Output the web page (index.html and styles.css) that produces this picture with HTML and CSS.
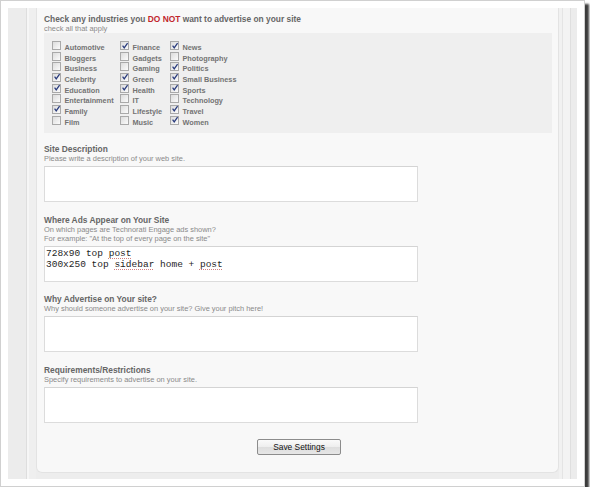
FILE: index.html
```html
<!DOCTYPE html>
<html>
<head>
<meta charset="utf-8">
<link rel="stylesheet" href="styles.css">
</head>
<body>
<div class="frame">
  <div class="shot">
    <div class="strip-left"></div>
    <div class="panel">
      <div class="label">Check any industries you <span class="red">DO NOT</span> want to advertise on your site</div>
      <div class="sub">check all that apply</div>
      <div class="checks">
        <div class="col col1">
          <div class="row"><span class="cb"></span><span class="lbl">Automotive</span></div>
          <div class="row"><span class="cb"></span><span class="lbl">Bloggers</span></div>
          <div class="row"><span class="cb"></span><span class="lbl">Business</span></div>
          <div class="row"><span class="cb on"><svg viewBox="0 0 9 9"><path d="M1.8 4.2 L3.6 6.6 L7.4 1.2"/></svg></span><span class="lbl">Celebrity</span></div>
          <div class="row"><span class="cb on"><svg viewBox="0 0 9 9"><path d="M1.8 4.2 L3.6 6.6 L7.4 1.2"/></svg></span><span class="lbl">Education</span></div>
          <div class="row"><span class="cb"></span><span class="lbl">Entertainment</span></div>
          <div class="row"><span class="cb on"><svg viewBox="0 0 9 9"><path d="M1.8 4.2 L3.6 6.6 L7.4 1.2"/></svg></span><span class="lbl">Family</span></div>
          <div class="row"><span class="cb"></span><span class="lbl">Film</span></div>
        </div>
        <div class="col col2">
          <div class="row"><span class="cb on"><svg viewBox="0 0 9 9"><path d="M1.8 4.2 L3.6 6.6 L7.4 1.2"/></svg></span><span class="lbl">Finance</span></div>
          <div class="row"><span class="cb"></span><span class="lbl">Gadgets</span></div>
          <div class="row"><span class="cb"></span><span class="lbl">Gaming</span></div>
          <div class="row"><span class="cb on"><svg viewBox="0 0 9 9"><path d="M1.8 4.2 L3.6 6.6 L7.4 1.2"/></svg></span><span class="lbl">Green</span></div>
          <div class="row"><span class="cb on"><svg viewBox="0 0 9 9"><path d="M1.8 4.2 L3.6 6.6 L7.4 1.2"/></svg></span><span class="lbl">Health</span></div>
          <div class="row"><span class="cb"></span><span class="lbl">IT</span></div>
          <div class="row"><span class="cb"></span><span class="lbl">Lifestyle</span></div>
          <div class="row"><span class="cb"></span><span class="lbl">Music</span></div>
        </div>
        <div class="col col3">
          <div class="row"><span class="cb on"><svg viewBox="0 0 9 9"><path d="M1.8 4.2 L3.6 6.6 L7.4 1.2"/></svg></span><span class="lbl">News</span></div>
          <div class="row"><span class="cb"></span><span class="lbl">Photography</span></div>
          <div class="row"><span class="cb on"><svg viewBox="0 0 9 9"><path d="M1.8 4.2 L3.6 6.6 L7.4 1.2"/></svg></span><span class="lbl">Politics</span></div>
          <div class="row"><span class="cb on"><svg viewBox="0 0 9 9"><path d="M1.8 4.2 L3.6 6.6 L7.4 1.2"/></svg></span><span class="lbl">Small Business</span></div>
          <div class="row"><span class="cb on"><svg viewBox="0 0 9 9"><path d="M1.8 4.2 L3.6 6.6 L7.4 1.2"/></svg></span><span class="lbl">Sports</span></div>
          <div class="row"><span class="cb"></span><span class="lbl">Technology</span></div>
          <div class="row"><span class="cb on"><svg viewBox="0 0 9 9"><path d="M1.8 4.2 L3.6 6.6 L7.4 1.2"/></svg></span><span class="lbl">Travel</span></div>
          <div class="row"><span class="cb on"><svg viewBox="0 0 9 9"><path d="M1.8 4.2 L3.6 6.6 L7.4 1.2"/></svg></span><span class="lbl">Women</span></div>
        </div>
      </div>

      <div class="label gap-first">Site Description</div>
      <div class="sub">Please write a description of your web site.</div>
      <div class="field"></div>

      <div class="label gap">Where Ads Appear on Your Site</div>
      <div class="sub">On which pages are Technorati Engage ads shown?</div>
      <div class="sub">For example: "At the top of every page on the site"</div>
      <div class="field mono">728x90 top <span class="spell">post</span><br>300x250 top <span class="spell">sidebar</span> home + <span class="spell">post</span></div>

      <div class="label gap">Why Advertise on Your site?</div>
      <div class="sub">Why should someone advertise on your site? Give your pitch here!</div>
      <div class="field"></div>

      <div class="label gap">Requirements/Restrictions</div>
      <div class="sub">Specify requirements to advertise on your site.</div>
      <div class="field"></div>

      <div class="actions"><button class="btn" type="button">Save Settings</button></div>
    </div>
    <div class="strip-right"></div>
  </div>
</div>
</body>
</html>
```

FILE: styles.css
```css
html, body {
  margin: 0;
  padding: 0;
  background: #ffffff;
}

.frame {
  box-sizing: border-box;
  width: 585px;
  height: 487px;
  border: 1px solid #d0d0d0;
  background: #ffffff;
  padding: 7px;
  box-shadow: 4px 4px 2px #3c3c3c;
}

.shot {
  display: flex;
  height: 471px;
  overflow: hidden;
  background: #ededed;
  font-family: "Liberation Sans", Arial, sans-serif;
}

.strip-left {
  flex: 0 0 28px;
  background: linear-gradient(to right, #ececec 0, #ececec 18px, #dedede 18px, #dedede 19px, #f6f6f6 19px, #f6f6f6 21px, #efefef 21px);
}

.strip-right {
  flex: 0 0 18px;
  background: linear-gradient(to right, #f1f1f1 0, #f1f1f1 3px, #e4e4e4 3px, #e4e4e4 4px, #f3f3f3 4px, #f3f3f3 11px, #dfdfdf 11px, #dfdfdf 12px, #ececec 12px);
}

.panel {
  flex: 0 0 523px;
  box-sizing: border-box;
  height: 465px;
  background: #f8f8f8;
  border: 1px solid #e3e3e3;
  border-top: none;
  border-radius: 0 0 6px 6px;
  padding: 6px 6px 0 7px;
}

.label {
  font-size: 8.4px;
  line-height: 10px;
  font-weight: bold;
  color: #666666;
  white-space: nowrap;
}

.red {
  color: #c1262c;
}

.sub {
  font-size: 7.45px;
  line-height: 9px;
  color: #8a8a8a;
  white-space: nowrap;
}

.checks {
  display: flex;
  box-sizing: border-box;
  width: 508px;
  height: 100px;
  background: #efefef;
  padding: 8px 0 0 8px;
}

.col1 { width: 68px; }
.col2 { width: 50px; }

.row {
  display: flex;
  align-items: baseline;
  height: 10.67px;
}

.cb {
  display: inline-block;
  box-sizing: border-box;
  flex: 0 0 9px;
  width: 9px;
  height: 9px;
  border: 1px solid #a9a9a9;
  background: linear-gradient(135deg, #dcdcdc, #fbfbfb);
  margin-right: 3.5px;
  position: relative;
}

.cb svg {
  position: absolute;
  left: -0.5px;
  top: -0.5px;
  width: 8px;
  height: 8px;
}

.cb svg path {
  fill: none;
  stroke: #283a7c;
  stroke-width: 1.4;
}

.lbl {
  font-size: 7.3px;
  line-height: 10.67px;
  font-weight: bold;
  color: #737373;
  white-space: nowrap;
}

.gap-first { margin-top: 11px; }
.gap { margin-top: 12.5px; }

.field {
  box-sizing: border-box;
  width: 374px;
  height: 36px;
  margin-top: 3px;
  background: #ffffff;
  border: 1px solid #dcdcdc;
  border-top-color: #d4d4d4;
}

.mono {
  font-family: "Liberation Mono", "Courier New", monospace;
  font-size: 9.5px;
  line-height: 11px;
  color: #1e1e1e;
  padding: 1px 1px;
  white-space: nowrap;
}

.spell {
  text-decoration: underline dotted #d08080;
  text-decoration-thickness: 1px;
  text-underline-offset: 2px;
}

.actions {
  display: flex;
  justify-content: center;
  width: 508px;
  margin-top: 16px;
}

.btn {
  box-sizing: border-box;
  width: 84px;
  height: 16px;
  padding: 0;
  margin: 0 0 0 2px;
  font-family: "Liberation Sans", Arial, sans-serif;
  font-size: 8.4px;
  color: #111111;
  border: 1px solid #8c8c8c;
  border-radius: 2px;
  background: linear-gradient(to bottom, #fafafa 0%, #eeeeee 50%, #dedede 51%, #e6e6e6 100%);
}
```
